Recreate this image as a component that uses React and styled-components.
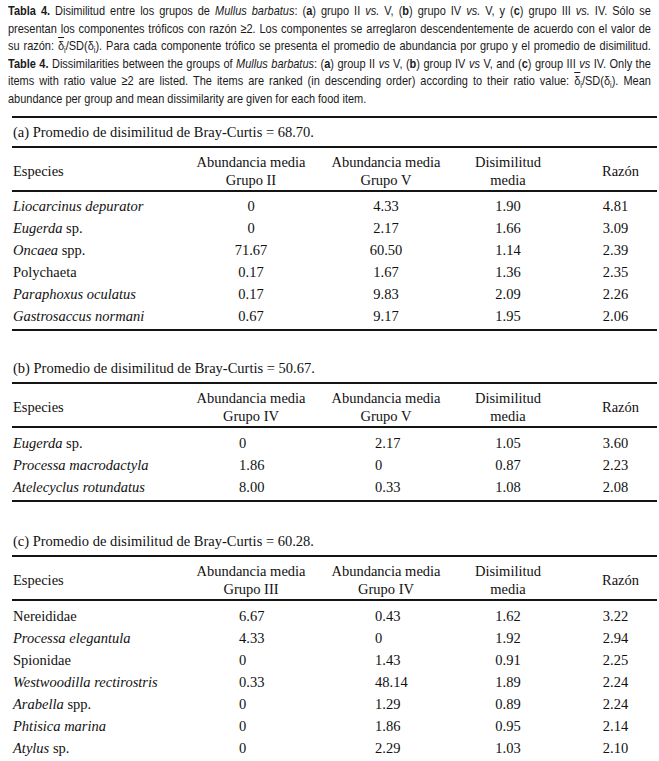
import React from 'react';
import styled, { createGlobalStyle } from 'styled-components';

const GlobalStyle = createGlobalStyle`
  html, body {
    margin: 0;
    padding: 0;
    background: #fff;
    overflow: hidden;
    font-family: "Liberation Serif", "Times New Roman", serif;
  }
`;

const Page = styled.div`
  width: 659px;
  padding: 2px 2px 0 0;
  box-sizing: border-box;
  color: #111;
`;

// Arial Narrow isn't installed, so the caption is Liberation Sans squeezed horizontally
const CaptionClip = styled.div`
  margin: 0 8px;
  width: 643px;
  overflow: hidden;
`;

const Caption = styled.div`
  width: 784px;
  transform: scaleX(0.82);
  transform-origin: left top;
  font-family: "Liberation Sans", Arial, sans-serif;
  font-size: 13.4px;
  line-height: 17.6px;
  color: #1a1a1a;
`;

const CapLine = styled.div`
  text-align: justify;
  text-align-last: ${(p) => (p.$last ? 'left' : 'justify')};
  white-space: nowrap;
`;

const Delta = styled.span`
  text-decoration: overline;
`;

const Sub = styled.sub`
  font-size: 9px;
  line-height: 0;
  vertical-align: -3px;
`;

const Rule = styled.div`
  height: 2px;
  margin-left: 12px;
  margin-top: ${(p) => p.$top || 0}px;
  background: #141414;
`;

const Section = styled.section`
  margin-top: ${(p) => p.$gap}px;
  font-size: 14.5px;
  color: #111;
`;

const Title = styled.div`
  height: 28px;
  line-height: 28px;
  padding-left: 13px;
`;

const Grid = styled.div`
  display: grid;
  grid-template-columns: 178px 122px 148px 96px 1fr;
  padding-left: 12px;
`;

const Header = styled(Grid)`
  padding-top: 5px;
  padding-bottom: 1px;
  line-height: 18px;
  align-items: center;
`;

const Body = styled.div`
  padding-top: ${(p) => p.$top}px;
  padding-bottom: 2px;
`;

const Row = styled(Grid)`
  height: 22px;
  line-height: 22px;
`;

const NameCell = styled.div`
  padding-left: 1px;
  white-space: nowrap;
`;

const HeadCell = styled.div`
  text-align: center;
  padding-left: ${(p) => p.$pad || 0}px;
`;

const NumCell = styled.div`
  text-align: ${(p) => p.$align};
  padding-left: ${(p) => p.$pad || 0}px;
`;

const tables = [
  {
    id: 'a',
    gap: 0,
    top: 3,
    title: '(a) Promedio de disimilitud de Bray-Curtis = 68.70.',
    groups: ['Grupo II', 'Grupo V'],
    align: 'center',
    rows: [
      [['Liocarcinus depurator', ''], '0', '4.33', '1.90', '4.81'],
      [['Eugerda', ' sp.'], '0', '2.17', '1.66', '3.09'],
      [['Oncaea', ' spp.'], '71.67', '60.50', '1.14', '2.39'],
      [['', 'Polychaeta'], '0.17', '1.67', '1.36', '2.35'],
      [['Paraphoxus oculatus', ''], '0.17', '9.83', '2.09', '2.26'],
      [['Gastrosaccus normani', ''], '0.67', '9.17', '1.95', '2.06'],
    ],
  },
  {
    id: 'b',
    gap: 23,
    top: 4,
    title: '(b) Promedio de disimilitud de Bray-Curtis = 50.67.',
    groups: ['Grupo IV', 'Grupo V'],
    align: 'left',
    rows: [
      [['Eugerda', ' sp.'], '0', '2.17', '1.05', '3.60'],
      [['Processa macrodactyla', ''], '1.86', '0', '0.87', '2.23'],
      [['Atelecyclus rotundatus', ''], '8.00', '0.33', '1.08', '2.08'],
    ],
  },
  {
    id: 'c',
    gap: 25,
    top: 4,
    title: '(c) Promedio de disimilitud de Bray-Curtis = 60.28.',
    groups: ['Grupo III', 'Grupo IV'],
    align: 'left',
    rows: [
      [['', 'Nereididae'], '6.67', '0.43', '1.62', '3.22'],
      [['Processa elegantula', ''], '4.33', '0', '1.92', '2.94'],
      [['', 'Spionidae'], '0', '1.43', '0.91', '2.25'],
      [['Westwoodilla rectirostris', ''], '0.33', '48.14', '1.89', '2.24'],
      [['Arabella', ' spp.'], '0', '1.29', '0.89', '2.24'],
      [['Phtisica marina', ''], '0', '1.86', '0.95', '2.14'],
      [['Atylus', ' sp.'], '0', '2.29', '1.03', '2.10'],
    ],
  },
];

const Ratio = () => (
  <>
    <Delta>δ</Delta>
    <Sub>i</Sub>/SD(δ<Sub>i</Sub>)
  </>
);

const DataTable = ({ t }) => {
  const left = t.align === 'left';
  return (
    <Section $gap={t.gap}>
      <Title>{t.title}</Title>
      <Rule />
      <Header>
        <NameCell>Especies</NameCell>
        <HeadCell>Abundancia media<br />{t.groups[0]}</HeadCell>
        <HeadCell>Abundancia media<br />{t.groups[1]}</HeadCell>
        <HeadCell>Disimilitud<br />media</HeadCell>
        <HeadCell $pad={28}>Razón</HeadCell>
      </Header>
      <Rule />
      <Body $top={t.top}>
        {t.rows.map(([name, a, b, d, r]) => (
          <Row key={name.join('')}>
            <NameCell>
              {name[0] && <i>{name[0]}</i>}
              {name[1]}
            </NameCell>
            <NumCell $align={left ? 'left' : 'center'} $pad={left ? 49 : 0}>{a}</NumCell>
            <NumCell $align={left ? 'left' : 'center'} $pad={left ? 63 : 0}>{b}</NumCell>
            <NumCell $align="center">{d}</NumCell>
            <NumCell $align="center" $pad={18}>{r}</NumCell>
          </Row>
        ))}
      </Body>
      <Rule />
    </Section>
  );
};

export default function App() {
  return (
    <Page>
      <GlobalStyle />
      <CaptionClip>
        <Caption>
          <CapLine>
            <b>Tabla 4.</b> Disimilitud entre los grupos de <i>Mullus barbatus</i>: (<b>a</b>) grupo II <i>vs.</i> V, (<b>b</b>) grupo IV <i>vs.</i> V, y (<b>c</b>) grupo III <i>vs.</i> IV. Sólo se
          </CapLine>
          <CapLine>
            presentan los componentes tróficos con razón ≥2. Los componentes se arreglaron descendentemente de acuerdo con el valor de
          </CapLine>
          <CapLine>
            su razón: <Ratio />. Para cada componente trófico se presenta el promedio de abundancia por grupo y el promedio de disimilitud.
          </CapLine>
          <CapLine>
            <b>Table 4.</b> Dissimilarities between the groups of <i>Mullus barbatus</i>: (<b>a</b>) group II <i>vs</i> V, (<b>b</b>) group IV <i>vs</i> V, and (<b>c</b>) group III <i>vs</i> IV. Only the
          </CapLine>
          <CapLine>
            items with ratio value ≥2 are listed. The items are ranked (in descending order) according to their ratio value: <Ratio />. Mean
          </CapLine>
          <CapLine $last>
            abundance per group and mean dissimilarity are given for each food item.
          </CapLine>
        </Caption>
      </CaptionClip>
      <Rule $top={8} />
      {tables.map((t) => (
        <DataTable key={t.id} t={t} />
      ))}
    </Page>
  );
}
